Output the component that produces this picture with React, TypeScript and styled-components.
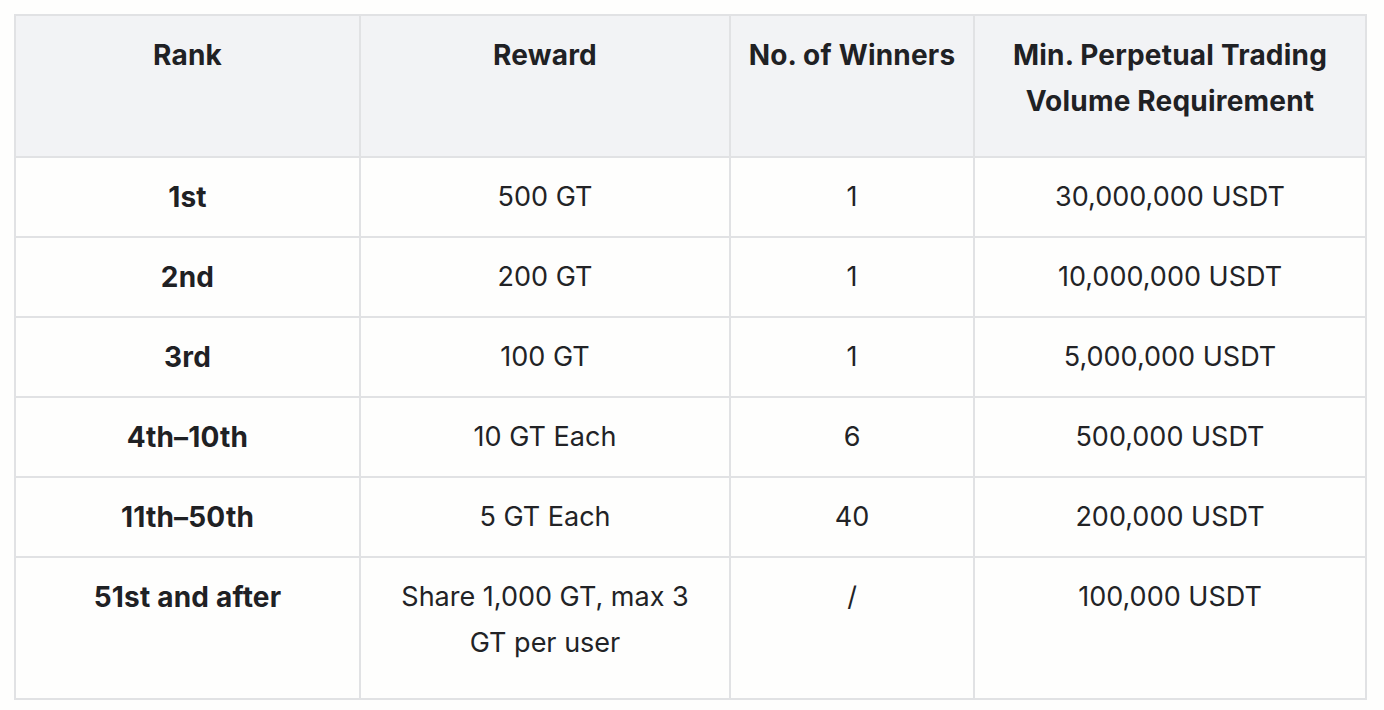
import styled, { createGlobalStyle } from "styled-components";

const GlobalStyle = createGlobalStyle`
  html, body {
    margin: 0;
    padding: 0;
    background: #fefefd;
  }
  body {
    font-family: Inter, "Noto Sans", sans-serif;
    color: #1f2124;
  }
`;

const Page = styled.div`
  padding: 14px 19px 12px 14px;
`;

const Table = styled.table`
  width: 1351px;
  border-collapse: collapse;
  table-layout: fixed;
  border: 2px solid #e1e2e4;
`;

const Cell = styled.td<{ $tall?: boolean }>`
  border: 2px solid #e1e2e4;
  padding: ${(p) => (p.$tall ? "16px 24px 32px" : "16px 24px")};
  text-align: center;
  vertical-align: top;
  font-size: 27px;
  line-height: 46px;
  font-weight: 400;
  color: #222326;
`;

const HeadCell = styled(Cell).attrs({ as: "th" })`
  background: #f2f3f5;
  font-size: 28px;
  font-weight: 700;
  letter-spacing: 0.2px;
  padding-left: 10px;
  padding-right: 10px;
  color: #1f2124;
`;

const RankCell = styled(Cell)`
  font-size: 28px;
  font-weight: 700;
  letter-spacing: 0.2px;
  color: #1f2124;
`;

const rows = [
  ["1st", "500 GT", "1", "30,000,000 USDT"],
  ["2nd", "200 GT", "1", "10,000,000 USDT"],
  ["3rd", "100 GT", "1", "5,000,000 USDT"],
  ["4th–10th", "10 GT Each", "6", "500,000 USDT"],
  ["11th–50th", "5 GT Each", "40", "200,000 USDT"],
  ["51st and after", "Share 1,000 GT, max 3 GT per user", "/", "100,000 USDT"],
];

function App() {
  return (
    <Page>
      <GlobalStyle />
      <Table>
        <colgroup>
          <col style={{ width: 345 }} />
          <col style={{ width: 370 }} />
          <col style={{ width: 244 }} />
          <col style={{ width: 392 }} />
        </colgroup>
        <thead>
          <tr>
            <HeadCell $tall>Rank</HeadCell>
            <HeadCell $tall>Reward</HeadCell>
            <HeadCell $tall>No. of Winners</HeadCell>
            <HeadCell $tall>
              Min. Perpetual Trading
              <br />
              Volume Requirement
            </HeadCell>
          </tr>
        </thead>
        <tbody>
          {rows.map((r, i) => {
            const tall = i === rows.length - 1;
            return (
              <tr key={r[0]}>
                <RankCell $tall={tall}>{r[0]}</RankCell>
                <Cell $tall={tall}>{r[1]}</Cell>
                <Cell $tall={tall}>{r[2]}</Cell>
                <Cell $tall={tall}>{r[3]}</Cell>
              </tr>
            );
          })}
        </tbody>
      </Table>
    </Page>
  );
}

export default App;
